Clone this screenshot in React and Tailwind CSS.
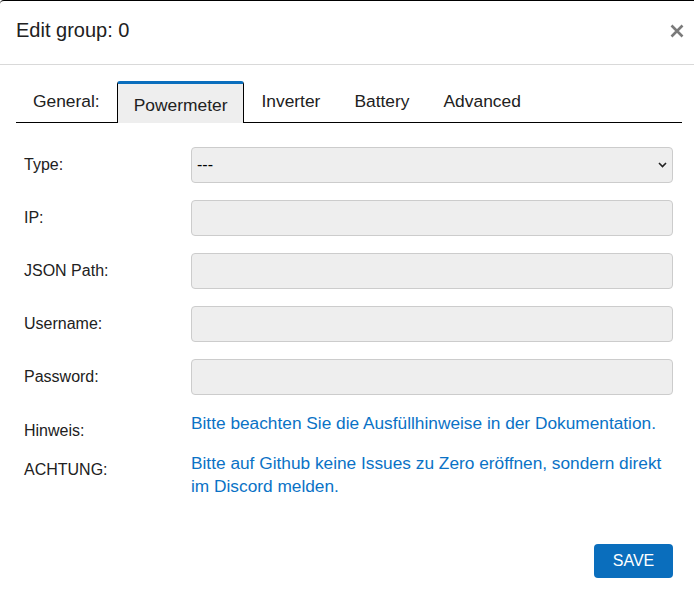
import React from "react";

const tabs = ["General:", "Powermeter", "Inverter", "Battery", "Advanced"];
const fields = ["IP:", "JSON Path:", "Username:", "Password:"];

export default function App() {
  return (
    <div className="w-[694px] h-[598px] bg-white border-t border-black rounded-tl-[4px] overflow-hidden text-[#212121]" style={{ fontFamily: '"Liberation Sans", Arial, sans-serif' }}>
      <div className="h-[64px] border-b border-[#d9d9d9] flex items-center justify-between pl-4 pr-[10px]">
        <h1 className="text-[20px] leading-none mb-[6px]">Edit group: 0</h1>
        <button className="w-[14px] h-[14px] mb-[4px]">
          <svg width="14" height="14" viewBox="0 0 14 14">
            <path d="M1.5 1.5 L12.5 12.5 M12.5 1.5 L1.5 12.5" stroke="#7a7a7a" strokeWidth="2.6" />
          </svg>
        </button>
      </div>

      <div className="ml-4 mr-3 mt-4">
        <ul className="flex border-b border-black h-[42px]">
          {tabs.map((t) =>
            t === "Powermeter" ? (
              <li key={t} className="px-[16px] h-[42px] -mb-px flex items-center justify-center bg-[#eeeeee] border-t-[3px] border-t-[#0a6ebd] border-x border-x-black rounded-t-[3px] text-[17.4px] leading-none pt-[5px]">
                {t}
              </li>
            ) : (
              <li key={t} className="px-[17px] h-[41px] flex items-center text-[17.4px] leading-none pt-[1px]">
                {t}
              </li>
            )
          )}
        </ul>

        <div className="pl-2 pr-[9px] pt-6 flex flex-col">
          <div className="flex flex-col gap-[17px]">
            <div className="flex items-center h-9">
              <div className="w-[167px] text-[16px]">Type:</div>
              <div className="relative flex-1">
                <select className="appearance-none w-full h-9 bg-[#eeeeee] border border-[#cccccc] rounded-[4px] pl-[5px] text-[16px] outline-none text-black">
                  <option>---</option>
                </select>
                <svg className="absolute right-[6px] top-[15px] pointer-events-none" width="9" height="6" viewBox="0 0 9 6">
                  <path d="M1 1 L4.5 4.5 L8 1" stroke="#222" strokeWidth="1.6" fill="none" />
                </svg>
              </div>
            </div>
            {fields.map((f) => (
              <div key={f} className="flex items-center h-9">
                <div className="w-[167px] text-[16px]">{f}</div>
                <input
                  type={f === "Password:" ? "password" : "text"}
                  className="flex-1 h-9 bg-[#eeeeee] border border-[#cccccc] rounded-[4px] outline-none"
                />
              </div>
            ))}
          </div>
          <div className="flex items-start mt-[17px] h-[23px]">
            <div className="w-[167px] text-[16px] pt-[7px] leading-[23px]">Hinweis:</div>
            <div className="flex-1 text-[17.3px] leading-[23px] text-[#0a72c6]">
              Bitte beachten Sie die Ausfüllhinweise in der Dokumentation.
            </div>
          </div>
          <div className="flex items-start mt-[17px]">
            <div className="w-[167px] text-[16px] pt-[6px] leading-[23px]">ACHTUNG:</div>
            <div className="flex-1 text-[17.3px] leading-[23px] text-[#0a72c6]">
              Bitte auf Github keine Issues zu Zero eröffnen, sondern direkt im Discord melden.
            </div>
          </div>
          <div className="flex justify-end mt-[46px]">
            <button className="w-[79px] h-[34px] bg-[#0a6ebd] text-white text-[16px] rounded-[4px]">SAVE</button>
          </div>
        </div>
      </div>
    </div>
  );
}
